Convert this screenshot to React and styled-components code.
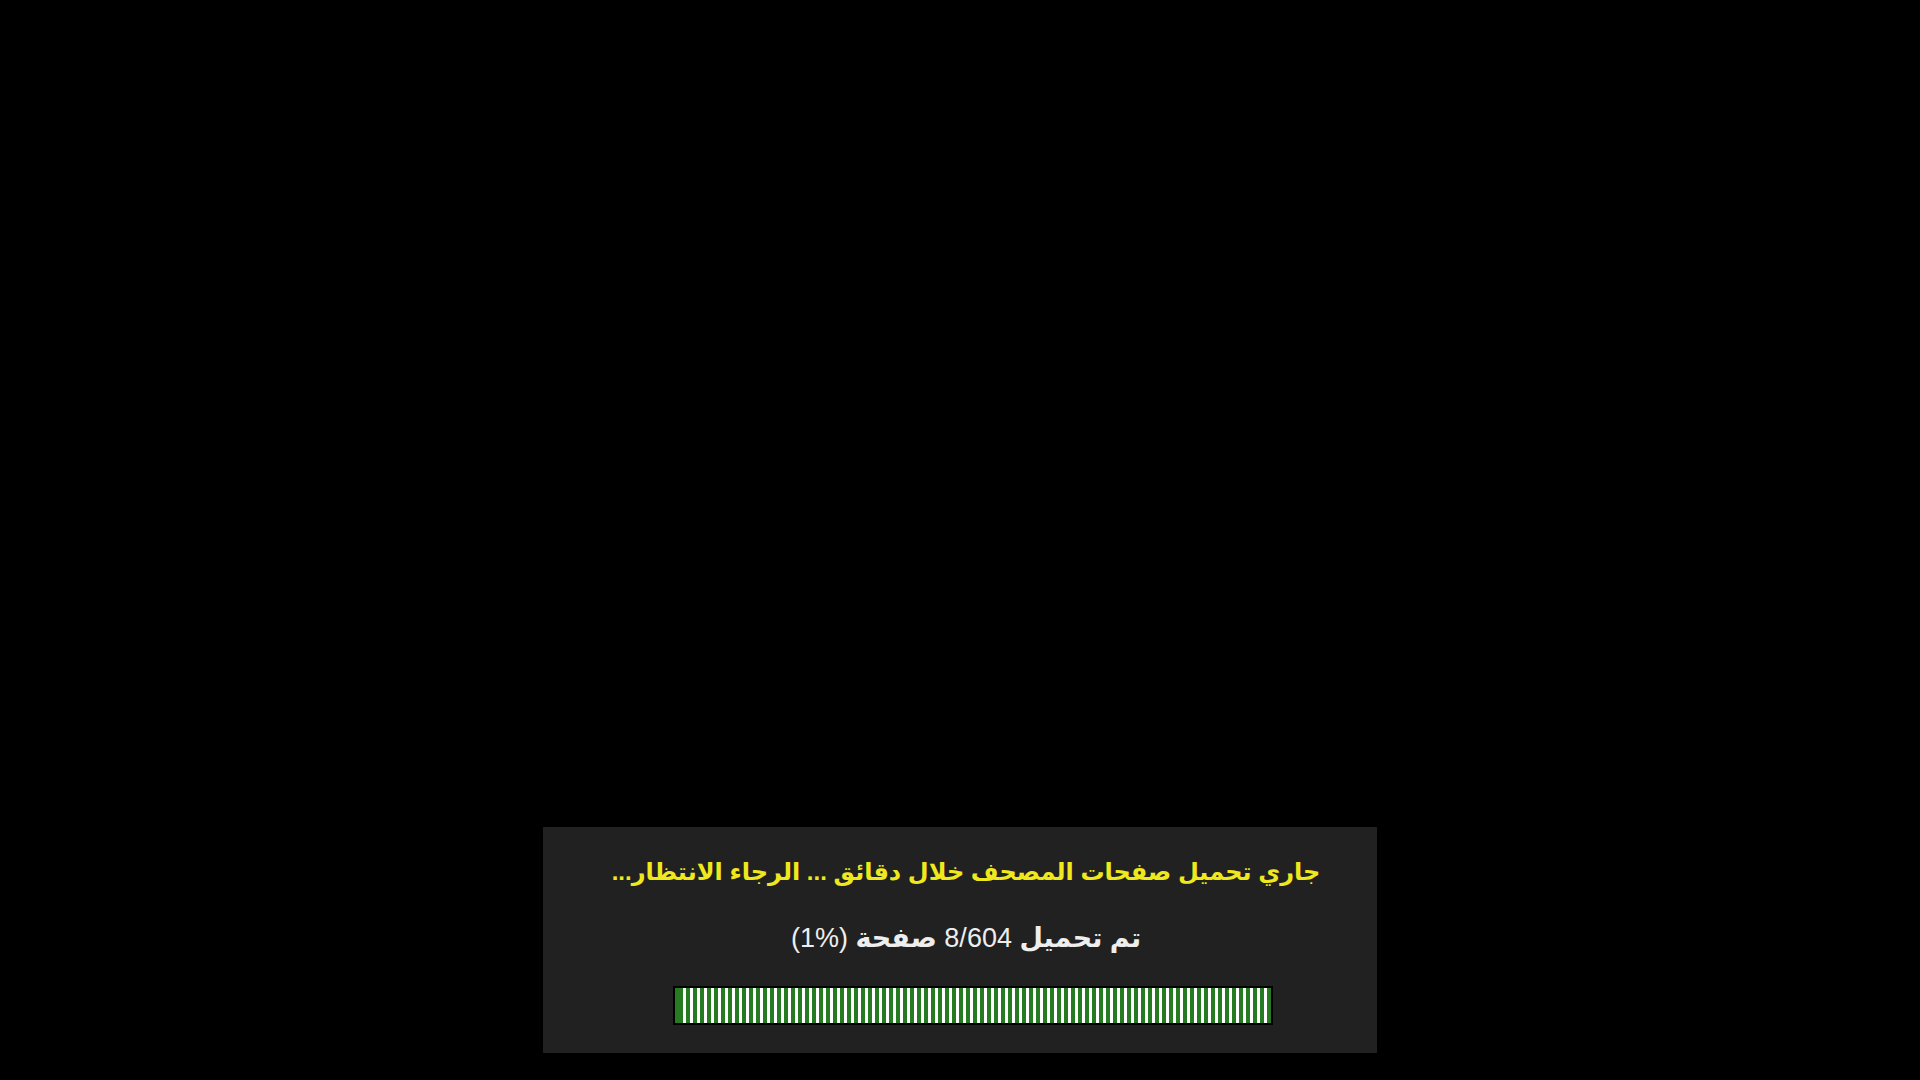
import React from 'react';
import styled, { createGlobalStyle } from 'styled-components';

const GlobalStyle = createGlobalStyle`
  html, body {
    margin: 0;
    padding: 0;
    background: #000;
  }
  #root {
    min-height: 100vh;
  }
`;

const Screen = styled.div`
  height: 100vh;
  display: flex;
  flex-direction: column;
  justify-content: flex-end;
  align-items: center;
  padding-bottom: 27px;
  box-sizing: border-box;
  background: #000;
`;

const Panel = styled.div`
  width: 834px;
  height: 226px;
  box-sizing: border-box;
  background: #212121;
  display: flex;
  flex-direction: column;
  align-items: center;
  padding: 27px 0 0 12px;
  font-family: 'Liberation Sans', 'DejaVu Sans', sans-serif;
`;

const Title = styled.div`
  color: #eee81c;
  font-size: 24px;
  font-weight: bold;
  line-height: 36px;
  white-space: nowrap;
`;

const Status = styled.div`
  margin-top: 33px;
  color: #eeeeee;
  font-size: 27px;
  line-height: 30px;
  white-space: nowrap;
`;

const Word = styled.span`
  font-weight: bold;
`;

const Ltr = styled.span`
  direction: ltr;
  unicode-bidi: isolate;
`;

const Track = styled.div`
  margin: 33px 0 0 14px;
  width: 600px;
  height: 39px;
  box-sizing: border-box;
  border: 2px solid #000;
  display: flex;
`;

const Fill = styled.div`
  background: #267a22;
`;

const Rest = styled.div`
  flex: 1;
  background: repeating-linear-gradient(
    to right,
    #ffffff 0px,
    #ffffff 3px,
    #267a22 3px,
    #267a22 7px
  );
`;

const loaded = 8;
const total = 604;

export default function App() {
  const pct = Math.round((loaded / total) * 100);
  return (
    <>
      <GlobalStyle />
      <Screen>
        <Panel>
          <Title dir="rtl">جاري تحميل صفحات المصحف خلال دقائق ... الرجاء الانتظار...</Title>
          <Status dir="rtl">
            <Word>تم تحميل</Word> <Ltr>{loaded}/{total}</Ltr> <Word>صفحة</Word>{' '}
            <Ltr>({pct}%)</Ltr>
          </Status>
          <Track>
            <Fill style={{ width: `${(loaded / total) * 100}%` }} />
            <Rest />
          </Track>
        </Panel>
      </Screen>
    </>
  );
}
